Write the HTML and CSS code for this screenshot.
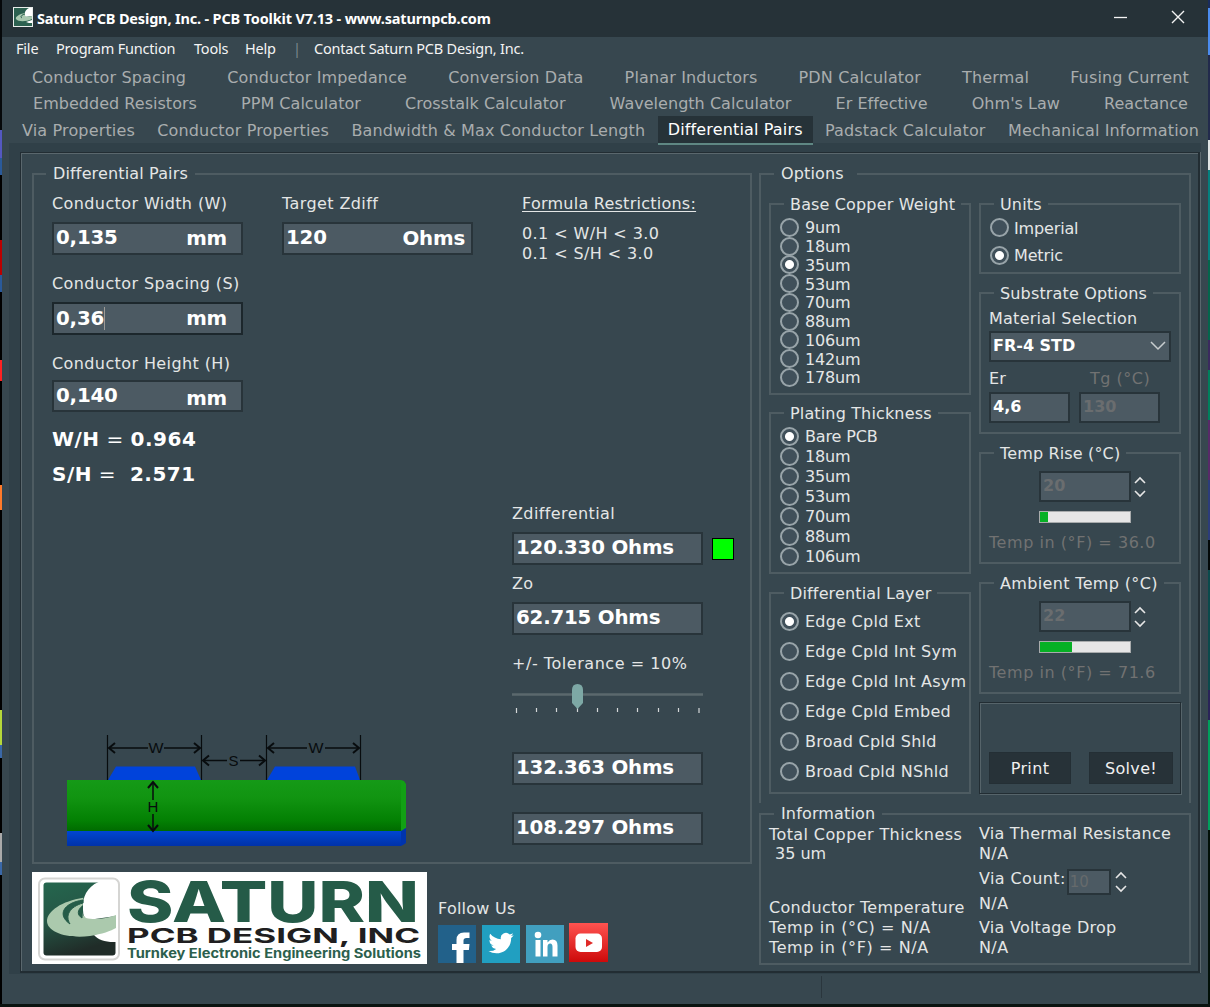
FILE: index.html
```html
<!DOCTYPE html>
<html lang="en">
<head>
<meta charset="utf-8">
<title>Saturn PCB Design, Inc. - PCB Toolkit V7.13</title>
<link rel="stylesheet" href="styles.css">
</head>
<body>
<svg class="defs" width="0" height="0" aria-hidden="true">
  <symbol id="spin" viewBox="0 0 12 24"><path d="M1 8l5-5 5 5M1 16l5 5 5-5" fill="none" stroke="#e6e6e6" stroke-width="1.6"/></symbol>
</svg>
<div class="window">
  <header class="titlebar">
    <svg class="app-icon" width="20" height="20" viewBox="0 0 20 20"><rect width="20" height="20" fill="#e8ecea"/><rect x="1" y="1" width="18" height="18" fill="#2c6150"/><path d="M16 1c-4 2-5 5-4 9l7-1V1z" fill="#fff"/><path d="M12 6C6 7 2 10 3 12c2 3 10 3 16 0V9c-4 1-7 1-7-1z" fill="#a9c9b0"/><path d="M12 7c-4 1-5 3-3 4" fill="none" stroke="#2c6150"/><path d="M13 15c2 1 4 1 6 1v-3z" fill="#fff"/></svg>
    <h1>Saturn PCB Design, Inc. - PCB Toolkit V7.13 - www.saturnpcb.com</h1>
    <svg class="win-buttons" width="72" height="16" viewBox="0 0 72 16"><path d="M0 8.500h13" stroke="#f4f4f4" stroke-width="1.300"/><path d="M58 2l12 12M70 2l-12 12" stroke="#f4f4f4" stroke-width="1.400"/></svg>
  </header>
  <nav class="menubar">
    <span class="m-file">File</span><span class="m-prog">Program Function</span><span class="m-tools">Tools</span><span class="m-help">Help</span><span class="sep">|</span><span class="m-contact">Contact Saturn PCB Design, Inc.</span>
  </nav>
  <nav class="tabs">
    <div class="tab-row row-a"><span>Conductor Spacing</span><span>Conductor Impedance</span><span>Conversion Data</span><span>Planar Inductors</span><span>PDN Calculator</span><span>Thermal</span><span>Fusing Current</span></div>
    <div class="tab-row row-b"><span>Embedded Resistors</span><span>PPM Calculator</span><span>Crosstalk Calculator</span><span>Wavelength Calculator</span><span>Er Effective</span><span>Ohm's Law</span><span>Reactance</span></div>
    <div class="tab-row row-c"><span>Via Properties</span><span>Conductor Properties</span><span>Bandwidth &amp; Max Conductor Length</span><span class="active">Differential Pairs</span><span>Padstack Calculator</span><span>Mechanical Information</span></div>
  </nav>
  <main class="page">
    <div class="sheet">
      <div class="left">
        <fieldset class="group pairs">
          <legend>Differential Pairs</legend>
          <div class="inputs">
            <div class="col-dims">
              <label>Conductor Width (W)</label>
              <div class="field"><b>0,135</b><b class="unit">mm</b></div>
              <label>Conductor Spacing (S)</label>
              <div class="field focus"><b class="caret">0,36</b><b class="unit">mm</b></div>
              <label>Conductor Height (H)</label>
              <div class="field height"><b>0,140</b><b class="unit low">mm</b></div>
              <p class="ratio wh"><b>W/H</b> = <b>0.964</b></p>
              <p class="ratio sh"><b>S/H</b> = <b>2.571</b></p>
            </div>
            <div class="col-target">
              <label>Target Zdiff</label>
              <div class="field"><b>120</b><b class="unit ohms">Ohms</b></div>
            </div>
            <div class="col-formula">
              <label class="underlined">Formula Restrictions:</label>
              <p>0.1 &lt; W/H &lt; 3.0</p>
              <p>0.1 &lt; S/H &lt; 3.0</p>
            </div>
          </div>
          <div class="lower">
            <svg class="diagram" width="340" height="113" viewBox="0 0 340 113">
              <defs>
                <linearGradient id="g1" x1="0" y1="0" x2="0" y2="1"><stop offset="0" stop-color="#159a17"/><stop offset=".35" stop-color="#119411"/><stop offset=".8" stop-color="#038003"/><stop offset="1" stop-color="#006b00"/></linearGradient>
                <linearGradient id="g2" x1="0" y1="0" x2="0" y2="1"><stop offset="0" stop-color="#0046d2"/><stop offset="1" stop-color="#0032a8"/></linearGradient>
              </defs>
              <rect y="45" width="334" height="51" fill="url(#g1)"/>
              <path d="M334 45l3 1 2 3v44l-5 4z" fill="#12a014"/>
              <rect y="96" width="334" height="15" fill="url(#g2)"/>
              <path d="M334 96l5-3v15l-3 2-2 1z" fill="#0034ae"/>
              <path d="M41 45l8-13.500h79l6 13.500zM200 45l8-13.500h80l5 13.500z" fill="#0043db"/>
              <g stroke="#080c0e" fill="none">
                <path d="M40.500 0v45M134.500 0v45M199.500 0v45M293.500 0v45" stroke-width="1.200"/>
                <path d="M43 13h38M97 13h36M202 13h38M258 13h34M136 25.500h24M173 25.500h25M86 48v17M86 79v16" stroke-width="1.500"/>
                <path d="M48 8l-6 5 6 5M127 8l6 5-6 5M207 8l-6 5 6 5M286 8l6 5-6 5M142 20.500l-6 5 6 5M192 20.500l6 5-6 5M81 53l5-6 5 6M81 90l5 6 5-6" stroke-width="2"/>
              </g>
              <g class="dims"><text x="81.500" y="18" textLength="15" lengthAdjust="spacingAndGlyphs">W</text><text x="241.500" y="18" textLength="15" lengthAdjust="spacingAndGlyphs">W</text><text x="161.500" y="31">S</text><text x="80.500" y="77">H</text></g>
            </svg>
            <div class="results">
              <label>Zdifferential</label>
              <div class="lit"><div class="field"><b>120.330 Ohms</b></div><i class="lamp"></i></div>
              <label>Zo</label>
              <div class="field"><b>62.715 Ohms</b></div>
              <label class="tol">+/- Tolerance = 10%</label>
              <svg class="slider" width="192" height="32" viewBox="0 0 192 32"><path d="M0 11.500h191" stroke="#5b686d" stroke-width="2.500"/><path d="M4.500 25v5M187 25v5M24.500 25v4M44.500 25v4M65.500 25v4M85.500 25v4M105.500 25v4M125.500 25v4M146.500 25v4M166.500 25v4" stroke="#d4d8d9" stroke-width="1.200"/><path d="M60 7q0-6 5.500-6t5.500 6v13l-5.500 6-5.500-6z" fill="#7da8a5"/></svg>
              <div class="field upper"><b>132.363 Ohms</b></div>
              <div class="field bottom"><b>108.297 Ohms</b></div>
            </div>
          </div>
        </fieldset>
        <footer class="brand">
          <svg class="logo" width="395" height="92" viewBox="0 0 395 92">
            <defs><linearGradient id="lg" x1="0" y1="0" x2=".3" y2="1"><stop offset="0" stop-color="#25664e"/><stop offset=".5" stop-color="#255746"/><stop offset="1" stop-color="#202c28"/></linearGradient></defs>
            <rect width="395" height="92" fill="#fff"/>
            <rect x="7" y="6.500" width="80" height="81" rx="6" fill="#fff" stroke="#d5d5d3" stroke-width="2"/>
            <rect x="11.500" y="10.500" width="72" height="73" rx="3" fill="url(#lg)"/>
            <path d="M66.500 10C55 15 50 25 51 38q0 8 5 10L84 44V10z" fill="#fff"/>
            <path d="M62 63C66 68 74 70.500 84 70V55z" fill="#fff"/>
            <path d="M51.300 25.700C30 29 15 39 15 49C15 60 35 67 58 64C70 62 79 59 84 56V43C74 47 62 48 54 46C49 42 49 36 51.300 31z" fill="#abc9ad"/>
            <path d="M51 28C31 31 25 43 38 52C33 44 37 35 51 31z" fill="#255c48" stroke="#255c48"/>
            <path d="M50.500 34C45 38 45 43 50 46z" fill="#255c48" stroke="#255c48"/>
            <text class="l-main" x="95" y="49.500" textLength="292" lengthAdjust="spacingAndGlyphs">SATURN</text>
            <text class="l-sub" x="95" y="71" textLength="293" lengthAdjust="spacingAndGlyphs">PCB DESIGN, INC</text>
            <text class="l-tag" x="95" y="86" textLength="294" lengthAdjust="spacingAndGlyphs">Turnkey Electronic Engineering Solutions</text>
          </svg>
          <div class="follow">
            <span>Follow Us</span>
            <div class="social">
              <svg width="38" height="38" viewBox="0 0 38 38"><rect width="38" height="38" fill="#22618a"/><path d="M18.500 38V25h-4.500v-6h4.500v-4q0-7.500 7.500-7.500h5.500v5.500h-3q-3 0-3 2.500v3.500h6l-.6 6h-5.400v13z" fill="#fff"/></svg>
              <svg width="38" height="38" viewBox="0 0 38 38"><rect width="38" height="38" fill="#219fc1"/><path transform="translate(6.500 5.500) scale(1.050)" d="M23.950 4.570a10 10 0 0 1-2.820.78 4.960 4.960 0 0 0 2.160-2.730c-.95.560-2 .96-3.130 1.190a4.920 4.920 0 0 0-8.380 4.480C7.690 8.100 4.070 6.130 1.640 3.160a4.820 4.820 0 0 0-.67 2.480c0 1.710.87 3.210 2.190 4.100a4.900 4.900 0 0 1-2.230-.62v.06a4.920 4.920 0 0 0 3.950 4.830 5 5 0 0 1-2.210.09 4.940 4.940 0 0 0 4.600 3.420A9.870 9.870 0 0 1 0 19.540a13.940 13.940 0 0 0 7.550 2.210c9.050 0 14-7.500 14-13.980 0-.21 0-.42-.02-.63a9.940 9.940 0 0 0 2.420-2.570z" fill="#fff"/></svg>
              <svg width="38" height="38" viewBox="0 0 38 38"><rect width="38" height="38" fill="#419fbf"/><circle cx="12" cy="10" r="3.300" fill="#fff"/><path d="M9.500 15h5v16.500h-5zM17 15h4.500v2.500q2-3 5-3 5 0 5 6v11h-5v-9.500q0-3.500-2.300-3.500-2.700 0-2.700 3.500v9.500H17z" fill="#fff"/></svg>
              <svg class="yt" width="39" height="39" viewBox="0 0 39 39"><defs><linearGradient id="yg" x1="0" y1="0" x2="0" y2="1"><stop offset="0" stop-color="#ff5350"/><stop offset="1" stop-color="#cd0a0a"/></linearGradient></defs><rect width="39" height="39" fill="url(#yg)"/><rect x="6.500" y="10.500" width="26.500" height="18.500" rx="5" fill="#fff"/><path d="M17 16v8l7-4z" fill="#e02a28"/></svg>
            </div>
          </div>
        </footer>
      </div>
      <div class="right">
        <fieldset class="group options">
          <legend class="wide">Options</legend>
          <div class="opt-col">
            <fieldset class="group copper">
              <legend>Base Copper Weight</legend>
              <ul class="radios"><li>9um</li><li>18um</li><li class="on">35um</li><li>53um</li><li>70um</li><li>88um</li><li>106um</li><li>142um</li><li>178um</li></ul>
            </fieldset>
            <fieldset class="group plating">
              <legend>Plating Thickness</legend>
              <ul class="radios"><li class="on">Bare PCB</li><li>18um</li><li>35um</li><li>53um</li><li>70um</li><li>88um</li><li>106um</li></ul>
            </fieldset>
            <fieldset class="group layer">
              <legend>Differential Layer</legend>
              <ul class="radios"><li class="on">Edge Cpld Ext</li><li>Edge Cpld Int Sym</li><li>Edge Cpld Int Asym</li><li>Edge Cpld Embed</li><li>Broad Cpld Shld</li><li>Broad Cpld NShld</li></ul>
            </fieldset>
          </div>
          <div class="opt-col second">
            <fieldset class="group units">
              <legend>Units</legend>
              <ul class="radios"><li>Imperial</li><li class="on">Metric</li></ul>
            </fieldset>
            <fieldset class="group substrate">
              <legend>Substrate Options</legend>
              <label>Material Selection</label>
              <div class="field small select"><b>FR-4 STD</b><svg width="16" height="10" viewBox="0 0 16 10"><path d="M1 1l7 7 7-7" fill="none" stroke="#c8cdcf" stroke-width="1.500"/></svg></div>
              <div class="pair">
                <div><label>Er</label><div class="field small"><b>4,6</b></div></div>
                <div class="off"><label class="tg">Tg (°C)</label><div class="field small"><b>130</b></div></div>
              </div>
            </fieldset>
            <fieldset class="group temp">
              <legend>Temp Rise (°C)</legend>
              <div class="spinner"><div class="field small off"><b>20</b></div><svg width="12" height="24"><use href="#spin"/></svg></div>
              <div class="progress"><i style="width:9%"></i></div>
              <p class="off">Temp in (°F) = 36.0</p>
            </fieldset>
            <fieldset class="group temp">
              <legend class="ambient">Ambient Temp (°C)</legend>
              <div class="spinner"><div class="field small off"><b>22</b></div><svg width="12" height="24"><use href="#spin"/></svg></div>
              <div class="progress"><i style="width:35.500%"></i></div>
              <p class="off">Temp in (°F) = 71.6</p>
            </fieldset>
            <div class="actions"><button>Print</button><button class="solve">Solve!</button></div>
          </div>
        </fieldset>
        <fieldset class="group info">
          <legend>Information</legend>
          <div class="info-a"><p>Total Copper Thickness</p><p class="um">35 um</p><p class="gap">Conductor Temperature</p><p>Temp in (°C) = N/A</p><p>Temp in (°F) = N/A</p></div>
          <div class="info-b"><p class="res">Via Thermal Resistance</p><p>N/A</p><div class="via"><span>Via Count:</span><div class="field tiny off">10</div><svg width="12" height="24"><use href="#spin"/></svg></div><p>N/A</p><p class="drop">Via Voltage Drop</p><p>N/A</p></div>
        </fieldset>
      </div>
    </div>
  </main>
  <div class="statusbar"><i></i></div>
</div>
</body>
</html>
```
FILE: styles.css
```css
*, *::before { box-sizing: border-box; }
body {
  margin: 0; width: 1210px; height: 1007px; overflow: hidden;
  background: linear-gradient(#05080a 0 130px, #5458c0 130px 158px, #2a5a9a 158px 175px, #000 175px 240px, #b00 240px 275px, #2a5a9a 275px 292px, #000 292px 360px, #f22 360px 381px, #000 381px 485px, #ff7a2a 485px 510px, #000 510px 710px, #b5d83a 710px 745px, #3a68a8 745px 758px, #000 758px 833px, #aaa 833px 862px, #3a68a8 862px 875px, #000 875px) 0 0 / 2px 1004px no-repeat,
    linear-gradient(#1a2c5c 0 8px, #4b8cf0 8px 55px, #222a4c 55px 140px, #dfe4e4 140px 170px, #04807e 170px 260px, #04664c 260px 340px, #3b2a5e 340px 370px, #00805c 370px 420px, #582a68 420px 480px, #2c3c7a 480px 540px, #030807 540px 570px, #0b4a4c 570px 690px, #2a2458 690px 720px, #00a05c 720px 830px, #021008 830px) 1208px 0 / 2px 1004px no-repeat,
    #0a1310;
  font: 16px/20px "DejaVu Sans", sans-serif; letter-spacing: .4px; color: #e4e6e6;
}
p, h1, ul, fieldset, legend { margin: 0; padding: 0; }
fieldset { min-width: 0; }
label, p, span, li, legend { white-space: nowrap; }
.defs { position: absolute; }
.window { margin: 0 2px; width: 1206px; height: 1004px; padding-left: 1px; background: #37474f; display: flex; flex-direction: column; }
.titlebar { height: 37px; margin-left: -1px; background: #263238; display: flex; align-items: center; padding: 0 22px 3px 11px; flex: none; }
.titlebar h1 { font: bold 14.500px/20px "Noto Sans", sans-serif; letter-spacing: -.17px; color: #fff; margin: 1px 0 0 4px; white-space: nowrap; }
.win-buttons { margin-left: auto; }
.menubar { height: 27px; flex: none; display: flex; padding: 1px 0 0 13px; font: 14.500px/20px "Noto Sans", sans-serif; letter-spacing: -.2px; color: #f4f4f4; }
.m-file { width: 40px; } .m-prog { width: 138px; } .m-tools { width: 51px; } .m-help { width: 48px; }
.sep { width: 21px; color: #7d888d; }

.tabs { height: 79px; flex: none; color: #a9adae; }
.tab-row { display: flex; justify-content: space-between; height: 26px; line-height: 28px; letter-spacing: .15px; }
.row-a { padding: 0 19px 0 29px; }
.row-b { padding: 0 20px 0 30px; letter-spacing: .03px; }
.row-c { padding: 0 9px 0 19px; height: 27px; line-height: 30px; }
.active { background: #263238; color: #fff; border-bottom: 2px solid #5f8783; padding: 0 10px; margin: 0 -10px; height: 29px; line-height: 27px; position: relative; }

.page { margin-left: 6px; width: 1192px; height: 831px; flex: none; background: #304048; padding: 9px 0 0 11px; }
.sheet { width: 1180px; height: 821px; background: #37474f; border: 1px solid #222d33; border-right-width: 2px; border-bottom-width: 2px; box-shadow: inset 1px 1px #5a676d, 1px 0 #5a676d; display: flex; padding: 11px 0 0 11px; }
.statusbar { height: 30px; padding: 2px 0 0 818px; display: flex; }
.statusbar i { width: 1px; height: 22px; background: #2a363d; }

.group { border: 2px solid #4e5c62; }
.group > legend { padding: 0 7px; height: 20px; letter-spacing: .15px; }
.left { width: 720px; }
.pairs { width: 720px; height: 700px; padding-left: 18px; }
.pairs > legend { margin-left: -6px; }
.inputs { height: 319px; display: flex; padding-top: 9px; }
.inputs label, .results label { display: block; height: 20px; line-height: 21px; }
.col-dims { width: 230px; } .col-target { width: 240px; }
.field { width: 191px; height: 33px; background: #4c5a63; border: 2px solid #28343a; display: flex; align-items: center; padding: 0 14px 1px 2px; margin: 9px 0 18px; font-size: 19.800px; letter-spacing: -.2px; color: #fff; }
.unit { margin-left: auto; position: relative; top: 1px; }
.ohms { margin-right: -8px; }
.focus { border-color: #1c272c; }
.field.height { height: 32px; margin: 7px 0 15px; }
.unit.low { top: 3px; }
.caret { border-right: 1px solid #9c9a96; height: 23px; line-height: 23px; }
.ratio { font-size: 20px; line-height: 24px; font-weight: normal; letter-spacing: .5px; color: #fff; margin-bottom: 11px; }
.ratio.sh b:last-child { margin-left: 7px; }
.underlined { text-decoration: underline; text-underline-offset: 2px; margin-bottom: 10px; letter-spacing: .25px; }
.col-formula p { line-height: 20px; position: relative; top: 1px; }
.lower { display: flex; }
.diagram { margin: 232px 105px 0 15px; flex: none; }
.dims { font: 15px "Liberation Sans", sans-serif; letter-spacing: 0; fill: #080c0e; }
.results .field { margin: 9px 0 8px; }
.lit { display: flex; align-items: center; }
.lamp { width: 22px; height: 22px; margin: 0 0 -1px 9px; background: #0f0; border: 1px solid #000; }
.results .tol { margin-top: 18px; letter-spacing: .55px; }
.slider { display: block; margin-top: 10px; }
.results .upper { margin: 37px 0 27px; }
.results .bottom { margin: 0; }

.brand { display: flex; margin-top: 8px; }
.logo { flex: none; }
.l-main { font: 800 57px "Inter", sans-serif; letter-spacing: 0; fill: #255b48; }
.l-sub { font: bold 20px "Inter", sans-serif; letter-spacing: 0; fill: #201e20; }
.l-tag { font: bold 13px "Inter", sans-serif; letter-spacing: 0; fill: #2c5f4d; }
.follow { margin: 26px 0 0 11px; }
.follow span { display: block; line-height: 21px; letter-spacing: .25px; height: 20px; }
.social { display: flex; gap: 6px; margin-top: 7px; }
.social .yt { margin: -2px 0 0 -1px; }

.right { margin-left: 7px; width: 432px; }
.options { height: 639px; width: 432px; border-bottom: 0; display: flex; padding: 10px 0 0 8px; }
.options > legend { margin-left: 5px; }
.options > legend.wide { padding-right: 13px; }
.opt-col { width: 202px; }
.second { margin: 0 0 0 8px; }
.opt-col .group { width: 202px; }
.opt-col .group > legend { margin-left: 13px; padding: 0 6px; line-height: 21px; }
.opt-col .group > legend.ambient { letter-spacing: .35px; }
.copper { height: 201px; } .plating { height: 171px; margin-top: 8px; } .layer { height: 211px; margin-top: 9px; }
.radios { list-style: none; padding: 4px 0 0 9px; }
.radios li { height: 18.750px; display: flex; align-items: center; gap: 6px; padding-top: 2px; letter-spacing: -.15px; }
.radios li::before { content: ""; width: 19px; height: 19px; flex: none; border-radius: 50%; border: 2px solid #98a4a9; margin-top: -2px; background: #40505a; }
.radios li.on::before { background: radial-gradient(circle, #fff 4px, #40505a 5px); }
.plating .radios { padding-top: 3px; } .plating li { height: 20px; }
.layer .radios { padding-top: 3px; } .layer li { height: 30px; letter-spacing: .25px; }
.units { height: 80px; } .units .radios { padding-top: 0; } .units li { height: 27.500px; gap: 5px; }
.substrate { height: 151px; margin-top: 9px; padding-left: 8px; }
.opt-col .substrate > legend { margin-left: 5px; }
.substrate label { display: block; margin-top: 5px; line-height: 21px; height: 20px; letter-spacing: .25px; }
.field.small { font-size: 16px; width: 81px; height: 31px; letter-spacing: 0; margin: 4px 0 0; padding-bottom: 1px; }
.field.select { width: 182px; padding-right: 3px; margin-top: 3px; }
.select svg { margin-left: auto; }
.pair { display: flex; gap: 9px; margin-top: 1px; }
.off { color: #717272; }
.off .field, .field.off { color: #6a6d6f; }
.substrate .tg { padding-left: 11px; letter-spacing: .5px; }
.temp { height: 121px; margin-top: 9px; padding-left: 8px; }
.temp p { line-height: 22px; letter-spacing: .55px; }
.opt-col .temp > legend { margin-left: 5px; }
.spinner { display: flex; gap: 3px; align-items: center; margin: 8px 0 0 50px; }
.spinner .field { width: 92px; margin: 0; }
.progress { width: 92px; height: 12px; margin: 9px 0 9px 50px; background: #e6e6e6; border: 1px solid #a8abac; }
.progress i { display: block; height: 10px; background: #06b025; }
.actions { height: 92px; width: 202px; margin-top: 8px; border: 1px solid #222d33; box-shadow: inset 1px 1px #56646a, 1px 1px #56646a; padding: 49px 0 0 9px; display: flex; gap: 18px; }
.actions button { width: 82px; height: 32px; padding: 1px 0 0; border: 1px solid #242f35; background: #273238; color: #f0f0f0; font: inherit; letter-spacing: .35px; }
.actions .solve { width: 84px; }

.info { height: 161px; display: flex; padding: 0 0 0 8px; margin-top: 1px; background: #37474f; }
.info > legend { margin-left: 5px; }
.info-a { width: 210px; padding-top: 1px; }
.info .um { padding-left: 6px; margin-top: -1px; letter-spacing: 0; }
.info .gap { margin-top: 34px; letter-spacing: .3px; }
.info .gap ~ p { letter-spacing: .6px; }
.info .res { letter-spacing: .22px; }
.via { display: flex; margin-top: 5px; height: 26px; }
.field.tiny { width: 44px; height: 26px; margin: 0 4px 0 1px; font-size: 15px; padding: 0 0 0 1px; color: #666a6c; }
.via svg { margin-top: 1px; }
.info .drop { margin-top: 4px; letter-spacing: .25px; }
.via + p { margin-top: -1px; }
```
